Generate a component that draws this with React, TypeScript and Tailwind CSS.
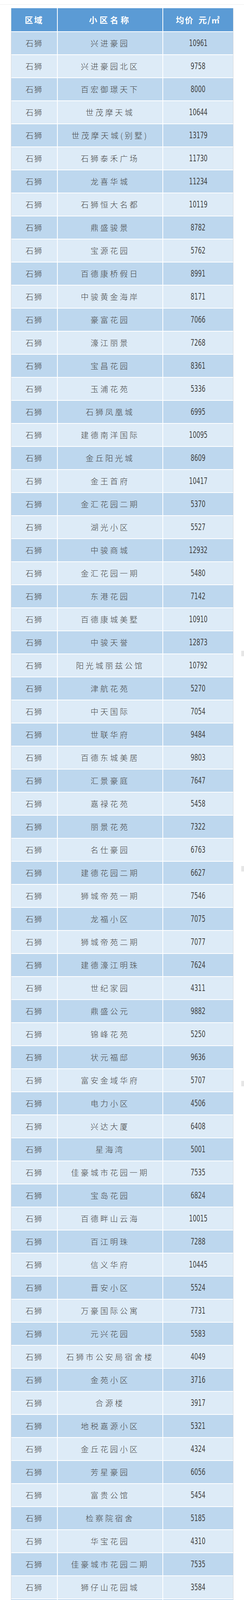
import React from "react";

const rows: [string, number][] = [
  ["兴进豪园", 10961],
  ["兴进豪园北区", 9758],
  ["百宏御璟天下", 8000],
  ["世茂摩天城", 10644],
  ["世茂摩天城(别墅)", 13179],
  ["石狮泰禾广场", 11730],
  ["龙喜华城", 11234],
  ["石狮恒大名都", 10119],
  ["鼎盛骏景", 8782],
  ["宝源花园", 5762],
  ["百德康桥假日", 8991],
  ["中骏黄金海岸", 8171],
  ["豪富花园", 7066],
  ["濠江丽景", 7268],
  ["宝昌花园", 8361],
  ["玉浦花苑", 5336],
  ["石狮凤凰城", 6995],
  ["建德南洋国际", 10095],
  ["金丘阳光城", 8609],
  ["金王首府", 10417],
  ["金汇花园二期", 5370],
  ["湖光小区", 5527],
  ["中骏商城", 12932],
  ["金汇花园一期", 5480],
  ["东港花园", 7142],
  ["百德康城美墅", 10910],
  ["中骏天誉", 12873],
  ["阳光城丽兹公馆", 10792],
  ["津航花苑", 5270],
  ["中天国际", 7054],
  ["世联华府", 9484],
  ["百德东城美居", 9803],
  ["汇景豪庭", 7647],
  ["嘉禄花苑", 5458],
  ["丽景花苑", 7322],
  ["名仕豪园", 6763],
  ["建德花园二期", 6627],
  ["狮城帝苑一期", 7546],
  ["龙福小区", 7075],
  ["狮城帝苑二期", 7077],
  ["建德濠江明珠", 7624],
  ["世纪家园", 4311],
  ["鼎盛公元", 9882],
  ["锦峰花苑", 5250],
  ["状元福邸", 9636],
  ["富安金域华府", 5707],
  ["电力小区", 4506],
  ["兴达大厦", 6408],
  ["星海湾", 5001],
  ["佳豪城市花园一期", 7535],
  ["宝岛花园", 6824],
  ["百德畔山云海", 10015],
  ["百江明珠", 7288],
  ["信义华府", 10445],
  ["晋安小区", 5524],
  ["万豪国际公寓", 7731],
  ["元兴花园", 5583],
  ["石狮市公安局宿舍楼", 4049],
  ["金苑小区", 3716],
  ["合源楼", 3917],
  ["地税嘉源小区", 5321],
  ["金丘花园小区", 4324],
  ["芳星豪园", 6056],
  ["富贵公馆", 5454],
  ["检察院宿舍", 5185],
  ["华宝花园", 4310],
  ["佳豪城市花园二期", 7535],
  ["狮仔山花园城", 3584],
  ["富贵天骄", 7474],
  ["中天名座", 9780],
  ["泉美豪庭", 8201],
  ["嘉华花园", 6748],
  ["信义豪园瓯景苑", 6784],
  ["泉美豪苑", 7444],
  ["竹秀大厦", 4176],
  ["竹林轩", 5070],
  ["远景花园", 4393],
  ["银昌新城", 5969],
  ["协盛花苑一期", 4554],
  ["世纪金源", 5726],
  ["鹏程楼", 3899],
  ["农资花苑", 3099],
  ["莲华花园", 4045],
  ["华兴花苑", 4963],
  ["华南花苑", 6763],
  ["濠江时代广场", 7310],
  ["豪富广场", 7049],
  ["富禄苑花园", 4016],
  ["曾坑花苑", 5703],
  ["农机大厦", 4532],
  ["联兴园", 6077],
  ["华闽世贸国际", 9498],
  ["湖滨嘉禾小区", 5188],
  ["兴闽商厦", 4384],
  ["金石小苑", 4683],
  ["金丘国贸大厦", 4848],
  ["德辉文化大厦", 4061],
  ["富丽宝豪庭", 5182],
  ["祥鹏大厦", 4788],
  ["华禄花园", 4734],
  ["狮城假日公寓", 11143],
  ["濠江国际2期", 10566],
  ["银昌小区", 3928],
  ["嘉利苑", 6539],
  ["和冠", 4318],
  ["香格丽舍", 6376],
  ["嘉丰华庭", 6807],
  ["世府名门", 8335],
];

// faint grey ticks on the right edge of the page
const marks = [1666, 2217, 2767, 4415, 4965, 5514, 6063];

const cjk = "font-['Noto_Sans_CJK_SC','Noto_Sans',sans-serif]";

export default function App() {
  return (
    <div className="relative h-[6484px] overflow-hidden bg-white">
      <div className="h-[11px]" />
      <div className="h-px bg-[#ececec]" />

      <div className="ml-[28px] mt-[9px] w-[570px] border-x border-[#d9d9d9]">
        <div className="grid grid-cols-[117px_268px_179px] gap-[2px]">
          {/* header */}
          <div className={`flex h-[59px] items-center justify-center bg-[#5b9bd5] text-[21px] font-bold tracking-[3px] text-white ${cjk}`}>
            区域
          </div>
          <div className={`flex h-[59px] items-center justify-center bg-[#5b9bd5] text-[21px] font-bold tracking-[6px] text-white ${cjk}`}>
            小区名称
          </div>
          <div className={`flex h-[59px] items-center justify-center gap-3 bg-[#5b9bd5] text-[21px] font-bold tracking-[2px] text-white ${cjk}`}>
            <span>均价</span>
            <span>元/㎡</span>
          </div>

          {rows.map(([name, price], i) => {
            const bg = i % 2 === 0 ? "bg-[#bdd7ee]" : "bg-[#ddebf7]";
            return (
              <React.Fragment key={i}>
                <div className={`flex h-[57px] items-center justify-center ${bg} text-[20px] font-light tracking-[2px] text-[#454545] ${cjk}`}>
                  石狮
                </div>
                <div className={`flex h-[57px] items-center justify-center ${bg} text-[20px] font-light tracking-[5px] text-[#454545] ${cjk}`}>
                  {name}
                </div>
                <div className={`flex h-[57px] items-center justify-center ${bg} text-[#454545]`}>
                  <span className="inline-block scale-x-[0.72] font-['Liberation_Sans_Narrow','DejaVu_Sans_Condensed',sans-serif] text-[23px]">
                    {price}
                  </span>
                </div>
              </React.Fragment>
            );
          })}
        </div>
      </div>

      {marks.map((y) => (
        <div
          key={y}
          className="absolute right-0 h-[14px] w-[7px] bg-[#e6e6e6]"
          style={{ top: y }}
        />
      ))}
    </div>
  );
}
